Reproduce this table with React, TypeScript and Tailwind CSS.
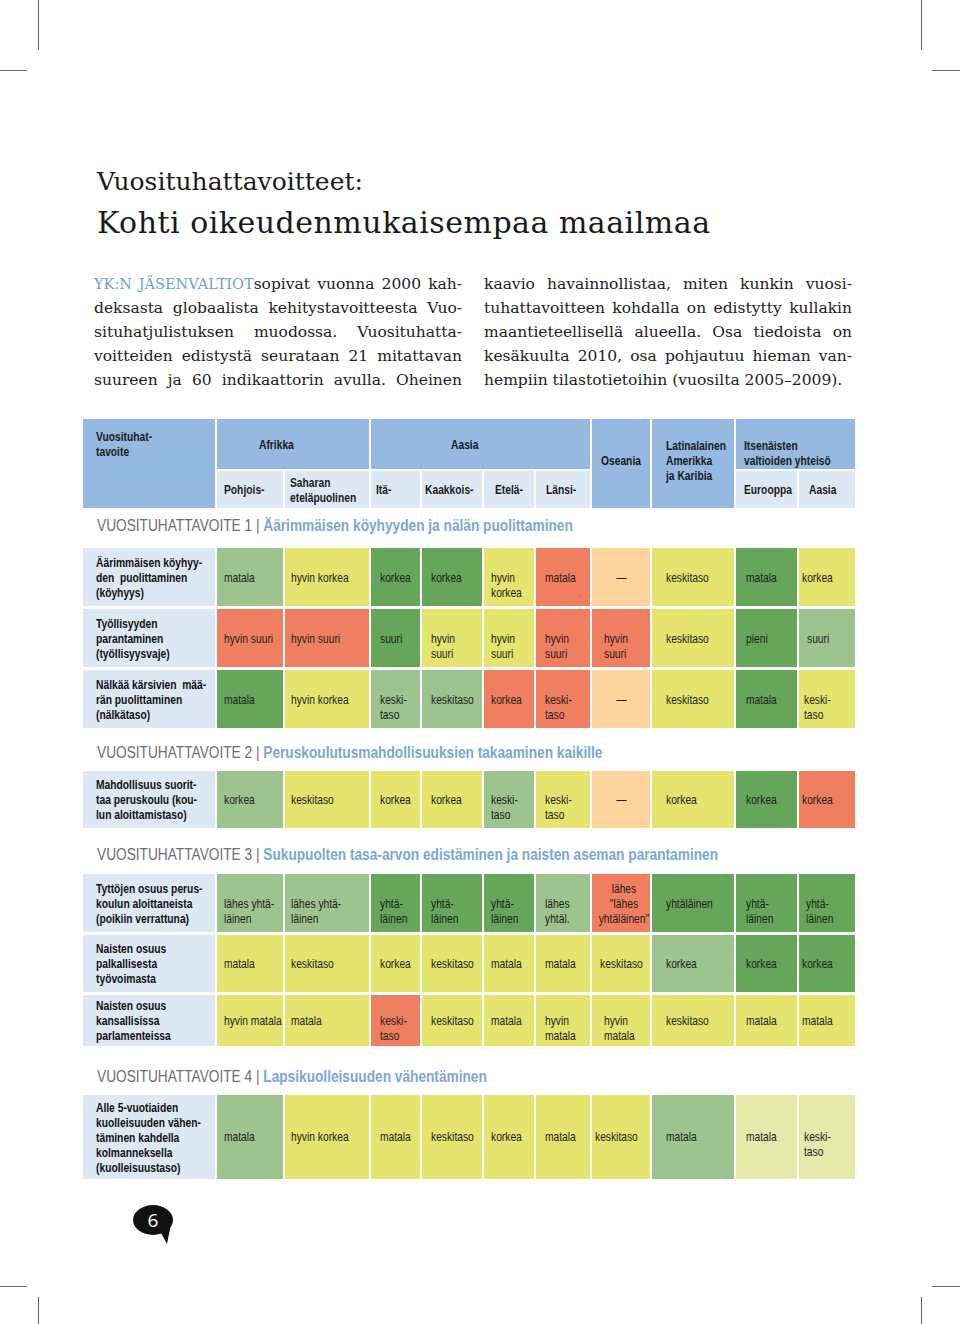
import React from "react";

const GRID =
  "grid grid-cols-[132px_66px_84px_49px_60px_50px_54px_58px_82px_61px_56px] gap-x-[2px]";

const BG: Record<string, string> = {
  dg: "bg-[#66a65a]",
  lg: "bg-[#9dc48e]",
  y: "bg-[#e5e46f]",
  r: "bg-[#f07e60]",
  p: "bg-[#fcd49e]",
  pale: "bg-[#e5eaab]",
};

const COL_PL = [
  "pl-[7px]",
  "pl-[6px]",
  "pl-[9px]",
  "pl-[9px]",
  "pl-[7px]",
  "pl-[9px]",
  "pl-[12px]",
  "pl-[14px]",
  "pl-[10px]",
  "pl-[3px]",
];

const H: Record<number, string> = {
  58: "h-[58px]",
  57: "h-[57px]",
  51: "h-[51px]",
  84: "h-[84px]",
};
const PT: Record<number, string> = {
  58: "pt-[22px]",
  57: "pt-[21px]",
  51: "pt-[18px]",
  84: "pt-[34px]",
};

type Cell = { t: string; c: string; pl?: string; center?: boolean; up?: boolean };
type Row = { label: string; h: number; cells: Cell[] };

const c = (t: string, col: string, extra: Partial<Cell> = {}): Cell => ({ t, c: col, ...extra });

/* Arial-Narrow look: Liberation Sans compressed horizontally */
function N({
  children,
  center,
  wide,
}: {
  children: React.ReactNode;
  center?: boolean;
  wide?: boolean;
}) {
  return (
    <span
      className={`inline-block whitespace-pre ${wide ? "scale-x-[0.82]" : "scale-x-[0.79]"} ${
        center ? "origin-center" : "origin-left"
      }`}
    >
      {children}
    </span>
  );
}

const S1: Row[] = [
  {
    label: "Äärimmäisen köyhyy-\nden  puolittaminen\n(köyhyys)",
    h: 58,
    cells: [
      c("matala", "lg"),
      c("hyvin korkea", "y"),
      c("korkea", "dg"),
      c("korkea", "dg"),
      c("hyvin\nkorkea", "y"),
      c("matala", "r"),
      c("—", "p", { center: true }),
      c("keskitaso", "y"),
      c("matala", "dg"),
      c("korkea", "y"),
    ],
  },
  {
    label: "Työllisyyden\nparantaminen\n(työllisyysvaje)",
    h: 58,
    cells: [
      c("hyvin suuri", "r"),
      c("hyvin suuri", "r"),
      c("suuri", "dg"),
      c("hyvin\nsuuri", "y"),
      c("hyvin\nsuuri", "y"),
      c("hyvin\nsuuri", "r"),
      c("hyvin\nsuuri", "r"),
      c("keskitaso", "y"),
      c("pieni", "dg"),
      c("suuri", "lg", { pl: "pl-[8px]" }),
    ],
  },
  {
    label: "Nälkää kärsivien  mää-\nrän puolittaminen\n(nälkätaso)",
    h: 58,
    cells: [
      c("matala", "dg"),
      c("hyvin korkea", "y"),
      c("keski-\ntaso", "lg"),
      c("keskitaso", "lg"),
      c("korkea", "r"),
      c("keski-\ntaso", "r"),
      c("—", "p", { center: true }),
      c("keskitaso", "y"),
      c("matala", "dg"),
      c("keski-\ntaso", "y", { pl: "pl-[5px]" }),
    ],
  },
];

const S2: Row[] = [
  {
    label: "Mahdollisuus suorit-\ntaa peruskoulu (kou-\nlun aloittamistaso)",
    h: 57,
    cells: [
      c("korkea", "lg"),
      c("keskitaso", "y"),
      c("korkea", "y"),
      c("korkea", "y"),
      c("keski-\ntaso", "lg"),
      c("keski-\ntaso", "y"),
      c("—", "p", { center: true }),
      c("korkea", "y"),
      c("korkea", "dg"),
      c("korkea", "r"),
    ],
  },
];

const S3: Row[] = [
  {
    label: "Tyttöjen osuus perus-\nkoulun aloittaneista\n(poikiin verrattuna)",
    h: 58,
    cells: [
      c("lähes yhtä-\nläinen", "lg"),
      c("lähes yhtä-\nläinen", "lg"),
      c("yhtä-\nläinen", "dg"),
      c("yhtä-\nläinen", "dg"),
      c("yhtä-\nläinen", "dg"),
      c("lähes\nyhtäl.", "lg"),
      c('lähes\n"lähes\nyhtäläinen"', "r", { center: true, up: true }),
      c("yhtäläinen", "dg"),
      c("yhtä-\nläinen", "dg"),
      c("yhtä-\nläinen", "dg", { pl: "pl-[7px]" }),
    ],
  },
  {
    label: "Naisten osuus\npalkallisesta\ntyövoimasta",
    h: 57,
    cells: [
      c("matala", "y"),
      c("keskitaso", "y"),
      c("korkea", "y"),
      c("keskitaso", "y"),
      c("matala", "y"),
      c("matala", "y"),
      c("keskitaso", "y", { pl: "pl-[8px]" }),
      c("korkea", "lg"),
      c("korkea", "dg"),
      c("korkea", "dg"),
    ],
  },
  {
    label: "Naisten osuus\nkansallisissa\nparlamenteissa",
    h: 51,
    cells: [
      c("hyvin matala", "y"),
      c("matala", "y"),
      c("keski-\ntaso", "r"),
      c("keskitaso", "y"),
      c("matala", "y"),
      c("hyvin\nmatala", "y"),
      c("hyvin\nmatala", "y"),
      c("keskitaso", "y"),
      c("matala", "y"),
      c("matala", "y"),
    ],
  },
];

const S4: Row[] = [
  {
    label:
      "Alle 5-vuotiaiden\nkuolleisuuden vähen-\ntäminen kahdella\nkolmanneksella\n(kuolleisuustaso)",
    h: 84,
    cells: [
      c("matala", "lg"),
      c("hyvin korkea", "y"),
      c("matala", "y"),
      c("keskitaso", "y"),
      c("korkea", "y"),
      c("matala", "y"),
      c("keskitaso", "y", { pl: "pl-[3px]" }),
      c("matala", "lg"),
      c("matala", "pale"),
      c("keski-\ntaso", "pale", { pl: "pl-[5px]" }),
    ],
  },
];

function Heading({ n, title, cls }: { n: number; title: string; cls: string }) {
  return (
    <div className={`${cls} pl-[14px] text-[16.7px] leading-[20px] whitespace-nowrap`}>
      <N wide>
        <span className="text-[#6d6e71]">VUOSITUHATTAVOITE {n} |</span>{" "}
        <span className="font-bold text-[#7aa7d6]">{title}</span>
      </N>
    </div>
  );
}

function Rows({ rows }: { rows: Row[] }) {
  return (
    <div className="flex flex-col gap-y-[3px]">
      {rows.map((r, i) => (
        <div key={i} className={`${GRID} grid-rows-1 ${H[r.h]}`}>
          <div className="bg-[#dce8f4] flex items-center pl-[13px] font-bold text-[13px] leading-[15px] text-[#111] overflow-hidden">
            <N>{r.label}</N>
          </div>
          {r.cells.map((cell, j) => {
            const pad = cell.center ? "text-center" : cell.pl ?? COL_PL[j];
            const pt = cell.up ? "pt-[7px]" : PT[r.h];
            return (
              <div
                key={j}
                className={`${BG[cell.c]} ${pt} ${pad} text-[13px] leading-[15px] text-[#1e1e1e]`}
              >
                <N center={cell.center}>{cell.t}</N>
              </div>
            );
          })}
        </div>
      ))}
    </div>
  );
}

const HB = "bg-[#95b9e0]";
const HL = "bg-[#dce8f4]";

function Header() {
  return (
    <div
      className={`${GRID} grid-rows-[50px_37px] gap-y-[2px] font-bold text-[13px] leading-[15px] text-[#1a1a1a]`}
    >
      <div className={`${HB} col-start-1 row-start-1 row-span-2 pt-[10px] pl-[13px]`}>
        <N>{"Vuosituhat-\ntavoite"}</N>
      </div>
      <div className={`${HB} col-start-2 col-span-2 row-start-1 flex items-center pl-[42px]`}>
        <N>Afrikka</N>
      </div>
      <div className={`${HB} col-start-4 col-span-4 row-start-1 flex items-center pl-[80px]`}>
        <N>Aasia</N>
      </div>
      <div className={`${HB} col-start-8 row-start-1 row-span-2 flex items-center pl-[9px] pb-[6px]`}>
        <N>Oseania</N>
      </div>
      <div className={`${HB} col-start-9 row-start-1 row-span-2 pt-[19px] pl-[14px]`}>
        <N>{"Latinalainen\nAmerikka\nja Karibia"}</N>
      </div>
      <div className={`${HB} col-start-10 col-span-2 row-start-1 pt-[19px] pl-[8px]`}>
        <N>{"Itsenäisten\nvaltioiden yhteisö"}</N>
      </div>
      <div className={`${HL} col-start-2 row-start-2 flex items-center pl-[7px]`}>
        <N>Pohjois-</N>
      </div>
      <div className={`${HL} col-start-3 row-start-2 flex items-center pl-[5px]`}>
        <N>{"Saharan\neteläpuolinen"}</N>
      </div>
      <div className={`${HL} col-start-4 row-start-2 flex items-center pl-[5px]`}>
        <N>Itä-</N>
      </div>
      <div className={`${HL} col-start-5 row-start-2 flex items-center pl-[3px]`}>
        <N>Kaakkois-</N>
      </div>
      <div className={`${HL} col-start-6 row-start-2 flex items-center pl-[11px]`}>
        <N>Etelä-</N>
      </div>
      <div className={`${HL} col-start-7 row-start-2 flex items-center pl-[10px]`}>
        <N>Länsi-</N>
      </div>
      <div className={`${HL} col-start-10 row-start-2 flex items-center pl-[8px]`}>
        <N>Eurooppa</N>
      </div>
      <div className={`${HL} col-start-11 row-start-2 flex items-center pl-[10px]`}>
        <N>Aasia</N>
      </div>
    </div>
  );
}

const J = "text-justify [text-align-last:justify] whitespace-nowrap";

export default function App() {
  return (
    <div className="relative w-[960px] h-[1324px] bg-white overflow-hidden">
      {/* crop marks */}
      <div className="absolute left-[38px] top-0 w-[1px] h-[50px] bg-[#666]" />
      <div className="absolute left-0 top-[70px] w-[27px] h-[1px] bg-[#666]" />
      <div className="absolute left-[921px] top-0 w-[1px] h-[50px] bg-[#666]" />
      <div className="absolute left-[932px] top-[70px] w-[28px] h-[1px] bg-[#666]" />
      <div className="absolute left-0 top-[1286px] w-[27px] h-[1px] bg-[#666]" />
      <div className="absolute left-[38px] top-[1297px] w-[1px] h-[27px] bg-[#666]" />
      <div className="absolute left-[932px] top-[1286px] w-[28px] h-[1px] bg-[#666]" />
      <div className="absolute left-[921px] top-[1297px] w-[1px] h-[27px] bg-[#666]" />

      <div className="pt-[163px]">
        <div className="ml-[97px] [font-family:'DejaVu_Serif',serif] text-[25px] leading-[38px] text-[#1a1a1a]">
          Vuosituhattavoitteet:
        </div>
        <div className="ml-[97px] mt-[2px] [font-family:'DejaVu_Serif',serif] text-[30px] tracking-[0.5px] leading-[40px] text-[#1a1a1a]">
          Kohti oikeudenmukaisempaa maailmaa
        </div>

        <div className="mt-[29px] ml-[94px] flex gap-[22px] [font-family:'DejaVu_Serif',serif] text-[15.5px] leading-[24px] text-[#222]">
          <div className="w-[368px]">
            <div className={J}>
              <span className="text-[#6a9fd4] text-[14.5px]">YK:N JÄSENVALTIOT</span>sopivat vuonna 2000 kah-
            </div>
            <div className={J}>deksasta globaalista kehitystavoitteesta Vuo-</div>
            <div className={J}>situhatjulistuksen muodossa. Vuosituhatta-</div>
            <div className={J}>voitteiden edistystä seurataan 21 mitattavan</div>
            <div className={J}>suureen ja 60 indikaattorin avulla. Oheinen</div>
          </div>
          <div className="w-[368px]">
            <div className={J}>kaavio havainnollistaa, miten kunkin vuosi-</div>
            <div className={J}>tuhattavoitteen kohdalla on edistytty kullakin</div>
            <div className={J}>maantieteellisellä alueella. Osa tiedoista on</div>
            <div className={J}>kesäkuulta 2010, osa pohjautuu hieman van-</div>
            <div className="whitespace-nowrap">hempiin tilastotietoihin (vuosilta 2005–2009).</div>
          </div>
        </div>

        <div className="mt-[27px] ml-[83px] w-[772px] [font-family:'Liberation_Sans',Arial,sans-serif]">
          <Header />
          <Heading n={1} title="Äärimmäisen köyhyyden ja nälän puolittaminen" cls="mt-[8px] mb-[12px]" />
          <Rows rows={S1} />
          <Heading n={2} title="Peruskoulutusmahdollisuuksien takaaminen kaikille" cls="mt-[15px] mb-[8px]" />
          <Rows rows={S2} />
          <Heading
            n={3}
            title="Sukupuolten tasa-arvon edistäminen ja naisten aseman parantaminen"
            cls="mt-[17px] mb-[9px]"
          />
          <Rows rows={S3} />
          <Heading n={4} title="Lapsikuolleisuuden vähentäminen" cls="mt-[21px] mb-[8px]" />
          <Rows rows={S4} />
        </div>

        <div className="relative ml-[133px] mt-[26px] w-[41px] h-[40px]">
          <svg width="41" height="40" viewBox="0 0 41 40" className="absolute left-0 top-0">
            <ellipse cx="20" cy="15" rx="20" ry="15" fill="#111" />
            <path d="M27 26 L38 19 L34 39 Z" fill="#111" />
          </svg>
          <span className="absolute left-0 top-0 w-[40px] h-[30px] flex items-center justify-center text-white text-[19px] leading-none [font-family:'Open_Sans',sans-serif]">
            6
          </span>
        </div>
      </div>
    </div>
  );
}
